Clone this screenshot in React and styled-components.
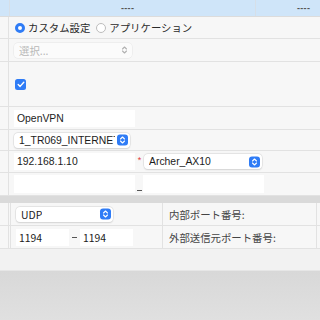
import React from "react";
import styled, { createGlobalStyle } from "styled-components";

const GlobalStyle = createGlobalStyle`
  html, body {
    margin: 0;
    padding: 0;
    width: 320px;
    height: 320px;
    overflow: hidden;
    background: #f2f2f2;
    font-family: "Liberation Sans", "Noto Sans CJK JP", sans-serif;
    font-size: 10.4px;
    color: #1c1c1c;
  }
`;

const Page = styled.div`
  width: 320px;
  height: 320px;
  display: flex;
  flex-direction: column;
`;

const Header = styled.div`
  display: grid;
  grid-template-columns: 9px 246px 1fr;
  height: 16px;
  background: #cfe5f9;
  border-bottom: 1px solid #dcdcdc;
`;

const HeadCell = styled.div`
  display: flex;
  align-items: center;
  padding-left: ${(p) => p.$pl || 0}px;
  border-left: ${(p) => (p.$first ? "none" : "1px solid #d6dfe8")};
  font-size: 9px;
  font-weight: bold;
  color: #555;
  letter-spacing: 0.3px;
`;

const Row = styled.div`
  display: grid;
  grid-template-columns: 9px 1fr;
  height: ${(p) => p.$h}px;
  background: #f7f7f7;
  border-bottom: 1px solid #e2e2e2;
  flex-shrink: 0;
`;

const Side = styled.div`
  border-right: 1px solid #e2e2e2;
`;

const Cell = styled.div`
  display: flex;
  align-items: center;
  padding-left: ${(p) => p.$pl ?? 5}px;
`;

const RadioGroup = styled.label`
  display: flex;
  align-items: center;
  gap: 3px;
  margin-right: 6px;
  font-family: "Noto Sans CJK JP", sans-serif;
  font-size: 10.4px;
  color: #2a2a2a;
`;

const Radio = styled.span`
  width: 10px;
  height: 10px;
  border-radius: 50%;
  box-sizing: border-box;
  background: #fff;
  border: ${(p) => (p.$on ? "3px solid #2f7cf6" : "1px solid #bdbdbd")};
`;

const SelectBox = styled.div`
  position: relative;
  box-sizing: border-box;
  width: ${(p) => p.$w}px;
  height: ${(p) => p.$h || 15}px;
  background: ${(p) => (p.$disabled ? "#fbfbfb" : "#fff")};
  border-radius: 4px;
  box-shadow: ${(p) =>
    p.$disabled ? "0 0 0 0.5px #e6e6e6" : "0 0 0 0.5px #d8d8d8, 0 0.5px 1.5px rgba(0,0,0,0.15)"};
  display: flex;
  align-items: center;
  padding-left: 5px;
  font-size: 10.4px;
  color: ${(p) => (p.$disabled ? "#b8b8b8" : "#1c1c1c")};
  white-space: nowrap;
  overflow: hidden;
`;

const SelectText = styled.span`
  overflow: hidden;
  max-width: ${(p) => p.$max}px;
  font-family: ${(p) => (p.$jp ? '"Noto Sans CJK JP", sans-serif' : "inherit")};
`;

const Stepper = styled.span`
  position: absolute;
  right: 2px;
  top: 50%;
  transform: translateY(-50%);
  width: 11px;
  height: 11px;
  border-radius: 3px;
  background: ${(p) => (p.$plain ? "transparent" : "#2f7cf6")};
  display: flex;
  align-items: center;
  justify-content: center;
`;

const Check = styled.span`
  width: 11px;
  height: 11px;
  border-radius: 2.5px;
  background: #2f7cf6;
  display: flex;
  align-items: center;
  justify-content: center;
`;

const Input = styled.div`
  box-sizing: border-box;
  width: ${(p) => p.$w}px;
  height: ${(p) => p.$h || 17}px;
  background: #fff;
  display: flex;
  align-items: center;
  padding-left: 3px;
  font-size: 10.4px;
  color: #1c1c1c;
`;

const Star = styled.span`
  color: #e23b3b;
  font-size: 9px;
  width: 9px;
  text-align: center;
  margin-top: -3px;
`;

const Dash = styled.span`
  width: ${(p) => p.$w || 8}px;
  display: flex;
  justify-content: center;
  align-self: ${(p) => (p.$low ? "flex-end" : "center")};
  padding-bottom: ${(p) => (p.$low ? 4 : 0)}px;
  &::before {
    content: "";
    width: 5px;
    height: 1px;
    background: #555;
  }
`;

const Band = styled.div`
  height: 7px;
  background: #dadada;
  flex-shrink: 0;
`;

const PortRow = styled.div`
  display: grid;
  grid-template-columns: 9px 2px 152px 154px 1fr;
  height: ${(p) => p.$h}px;
  background: #f7f7f7;
  border-bottom: 1px solid #e2e2e2;
  flex-shrink: 0;
`;

const PortCell = styled.div`
  display: flex;
  align-items: center;
  padding-left: ${(p) => p.$pl || 0}px;
  border-right: ${(p) => (p.$noBorder ? "none" : "1px solid #e2e2e2")};
  font-family: "Noto Sans CJK JP", sans-serif;
  color: #444;
`;

const Footer = styled.div`
  height: 21px;
  background: #f2f2f2;
  border-bottom: 1px solid #e6e6e6;
  flex-shrink: 0;
`;

const Desk = styled.div`
  flex: 1;
  background: linear-gradient(#d8d8d8, #e0e0e0);
`;

const Updown = ({ color = "#fff" }) => (
  <svg width="7" height="9" viewBox="0 0 7 9">
    <path d="M1.5 3.5 L3.5 1.5 L5.5 3.5 M1.5 5.5 L3.5 7.5 L5.5 5.5" fill="none" stroke={color} strokeWidth="1.1" strokeLinecap="round" strokeLinejoin="round" />
  </svg>
);

const Select = ({ w, disabled, text, max, jp }) => (
  <SelectBox $w={w} $disabled={disabled}>
    <SelectText $max={max} $jp={jp}>{text}</SelectText>
    <Stepper $plain={disabled}>
      <Updown color={disabled ? "#b0b0b0" : "#fff"} />
    </Stepper>
  </SelectBox>
);

const App = () => {
  return (
    <Page>
      <GlobalStyle />
      <Header>
        <HeadCell $first />
        <HeadCell $pl={111}>----</HeadCell>
        <HeadCell $pl={41}>----</HeadCell>
      </Header>

      <Row $h={21}>
        <Side />
        <Cell $pl={6}>
          <RadioGroup>
            <Radio $on />
            カスタム設定
          </RadioGroup>
          <RadioGroup>
            <Radio />
            アプリケーション
          </RadioGroup>
        </Cell>
      </Row>

      <Row $h={22}>
        <Side />
        <Cell>
          <Select w={118} disabled text="選択..." jp />
        </Cell>
      </Row>

      <Row $h={44}>
        <Side />
        <Cell $pl={6}>
          <Check>
            <svg width="8" height="7" viewBox="0 0 8 7">
              <path d="M1.2 3.6 L3.1 5.4 L6.8 1.3" fill="none" stroke="#fff" strokeWidth="1.4" strokeLinecap="round" strokeLinejoin="round" />
            </svg>
          </Check>
        </Cell>
      </Row>

      <Row $h={22}>
        <Side />
        <Cell>
          <Input $w={121}>OpenVPN</Input>
        </Cell>
      </Row>

      <Row $h={20}>
        <Side />
        <Cell>
          <Select w={116} text="1_TR069_INTERNET_R_VID_" max={96} />
        </Cell>
      </Row>

      <Row $h={21}>
        <Side />
        <Cell>
          <Input $w={121}>192.168.1.10</Input>
          <Star>*</Star>
          <Select w={118} text="Archer_AX10" />
        </Cell>
      </Row>

      <Row $h={22}>
        <Side />
        <Cell>
          <Input $w={121} $h={18} />
          <Dash $low />
          <Input $w={121} $h={18} />
        </Cell>
      </Row>

      <Band />

      <PortRow $h={22}>
        <PortCell />
        <PortCell />
        <PortCell $pl={5}>
          <Select w={97} text="UDP" />
        </PortCell>
        <PortCell $pl={6}>内部ポート番号:</PortCell>
        <PortCell $noBorder />
      </PortRow>

      <PortRow $h={22}>
        <PortCell />
        <PortCell />
        <PortCell $pl={5}>
          <Input $w={53}>1194</Input>
          <Dash $w={11} />
          <Input $w={53}>1194</Input>
        </PortCell>
        <PortCell $pl={6}>外部送信元ポート番号:</PortCell>
        <PortCell $noBorder />
      </PortRow>

      <Footer />
      <Desk />
    </Page>
  );
};

export default App;
